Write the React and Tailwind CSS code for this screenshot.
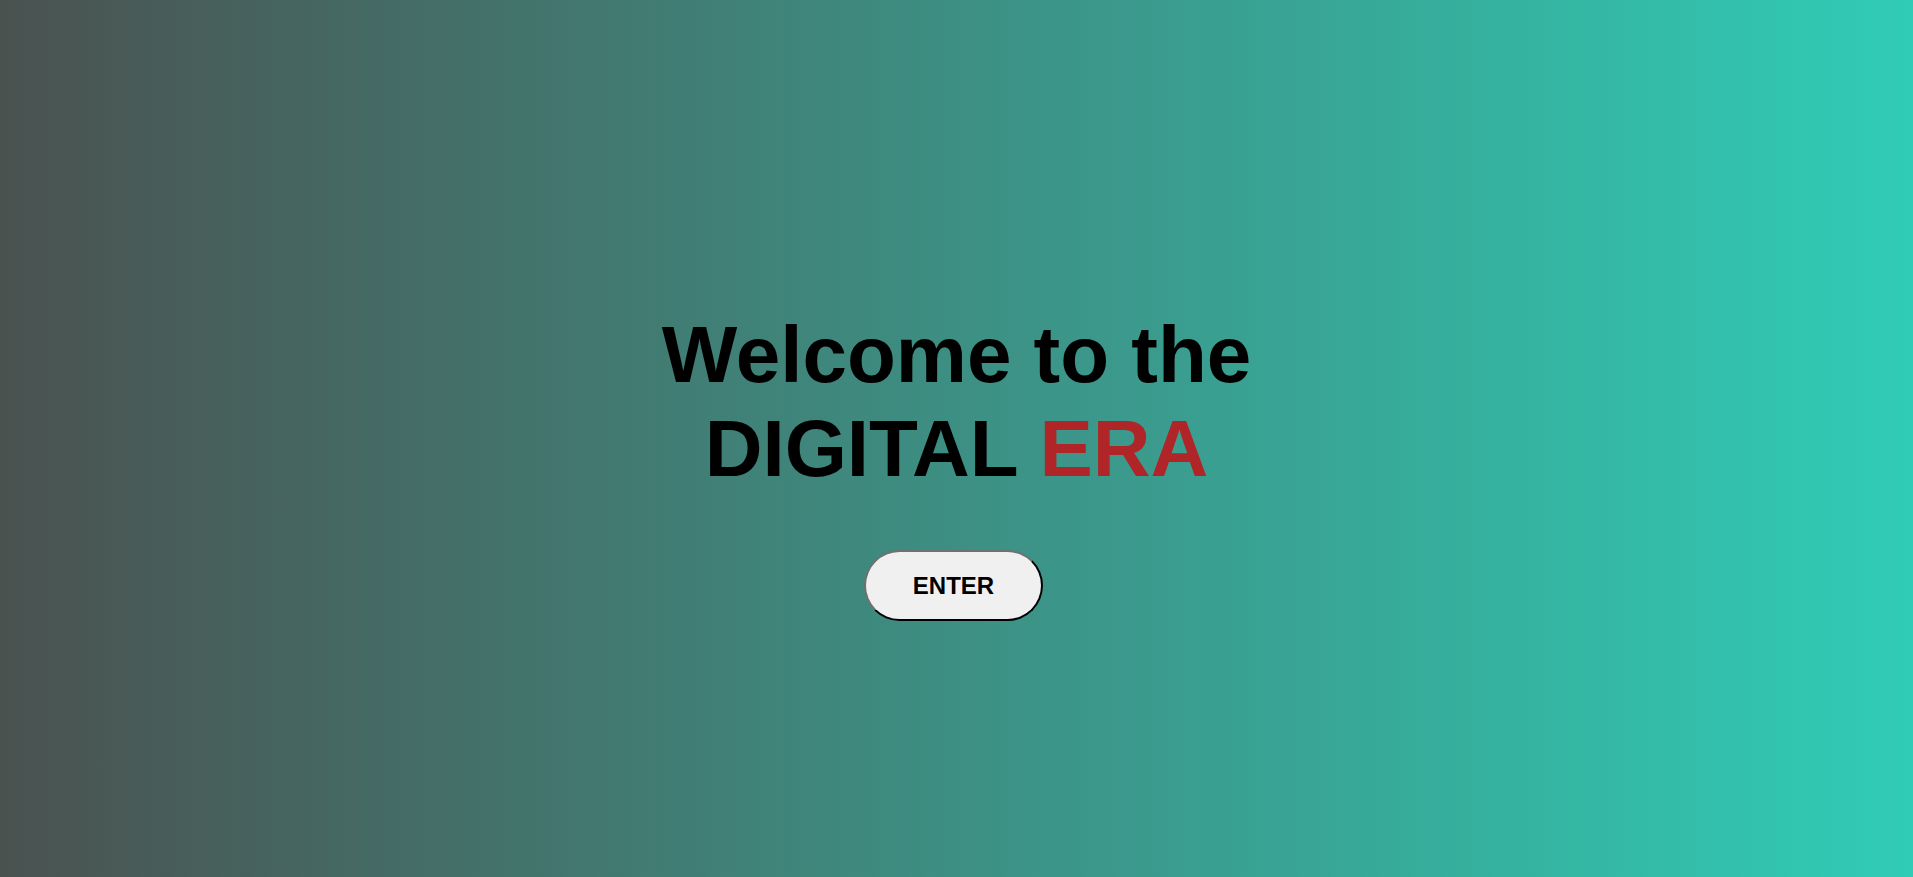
export default function App() {
  return (
    <div className="w-full h-[877px] bg-[linear-gradient(to_right,#4a5250,#30ccb6)] flex flex-col items-center" style={{ fontFamily: '"Liberation Sans", Arial, sans-serif' }}>
      <h1 className="mt-[308px] text-center text-[80px] leading-[94px] font-bold text-black">
        Welcome to the
        <br />
        DIGITAL <span className="text-[#b02527]">ERA</span>
      </h1>
      <button className="mt-[54px] mr-[6px] w-[179px] h-[71px] rounded-full bg-[#f0f0f0] border-2 border-t-[#707070] border-l-[#707070] border-r-black border-b-black text-[24px] font-bold text-black">
        ENTER
      </button>
    </div>
  );
}
